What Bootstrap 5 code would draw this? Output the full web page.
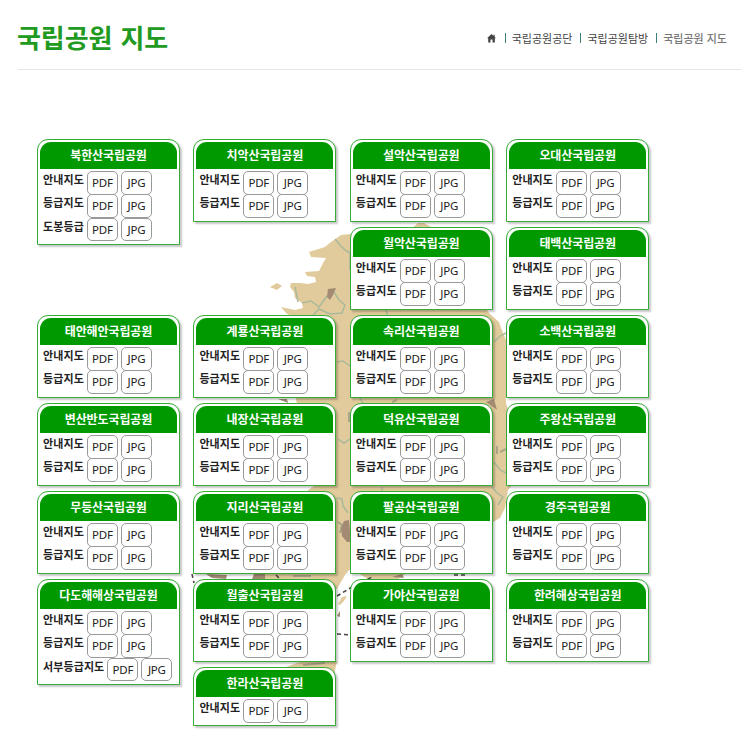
<!DOCTYPE html>
<html lang="ko">
<head>
  <meta charset="UTF-8" />
  <meta name="viewport" content="width=device-width, initial-scale=1.0"/>
  <title>국립공원 지도</title>
  <link href="https://cdn.jsdelivr.net/npm/bootstrap@5.3.0/dist/css/bootstrap.min.css" rel="stylesheet"/>
  <style>
    body {
      font-family: "Noto Sans", "Noto Sans CJK KR", sans-serif;
      color: #222;
      background: #fff;
      overflow: hidden;
    }
    .page-head {
      height: 70px;
      margin: 0 2px 0 18px;
      padding-right: 15px;
      border-bottom: 1px solid #e5e5e5;
    }
    .page-title {
      font: 700 26px/36px "Noto Sans CJK KR", sans-serif;
      color: #219a21;
      margin: 19px 0 0 -1px;
      letter-spacing: -.1px;
      word-spacing: 1px;
    }
    .crumbs {
      font: 400 11px/16px "Noto Sans CJK KR", sans-serif;
      color: #444;
      margin-top: 30px;
    }
    .crumbs svg { margin-right: 9px; }
    .crumbs span {
      display: flex;
      align-items: center;
      margin-right: 8px;
    }
    .crumbs span::before {
      content: "";
      width: 1px;
      height: 10px;
      background: #3c7f7b;
      margin-right: 6px;
    }
    .crumbs span:last-child {
      margin-right: -1px;
      font-weight: 500;
      color: #777;
    }
    .map-area {
      height: 684px;
      padding: 69px 0 0 37px;
    }
    .map-bg {
      position: absolute;
      left: 0;
      top: 0;
      z-index: 0;
    }
    .park-grid {
      position: relative;
      display: grid;
      grid-template-columns: repeat(4, 143px);
      grid-auto-rows: 82px;
      column-gap: 13.4px;
      row-gap: 6px;
      align-items: start;
    }
    .park {
      border: 1px solid #35ac35;
      border-radius: 11px 11px 0 0;
      background: #fff;
      padding: 2px 2px 3px;
      box-shadow: 2px 2px 2px rgba(0, 0, 0, .22);
    }
    .park h2 {
      height: 27px;
      margin: 0 0 2px;
      border-radius: 11px 11px 0 0;
      background: #090;
      color: #fff;
      font: 700 12px/25px "Noto Sans CJK KR", sans-serif;
      letter-spacing: -.1px;
      text-align: center;
    }
    .map-row {
      height: 23.3px;
      padding-left: 3px;
    }
    .map-label {
      font: 700 11px/17px "Noto Sans CJK KR", sans-serif;
      letter-spacing: .1px;
      color: #222;
      margin-right: 3px;
    }
    .map-btn {
      width: 31px;
      height: 23.5px;
      margin-right: 3px;
      border: 1px solid #999;
      border-radius: 5px;
      background: #fff;
      color: #222;
      font: 400 11.5px/21px "Noto Sans", sans-serif;
      letter-spacing: -.2px;
      text-align: center;
      text-decoration: none;
    }
  </style>
</head>
<body>
  <header class="page-head d-flex justify-content-between align-items-start">
    <h1 class="page-title">국립공원 지도</h1>
    <nav class="crumbs d-flex align-items-center">
      <svg width="9" height="9" viewBox="0 0 9 9"><path d="M4.5 0 0 4.3h1.2V8.5h2.3V5.5h2v3h2.3V4.3H9L7.7 3V.7H6.5v1.2z" fill="#444"/></svg>
      <span>국립공원공단</span>
      <span>국립공원탐방</span>
      <span>국립공원 지도</span>
    </nav>
  </header>

  <main class="map-area">
    <!-- Map of the peninsula behind the park cards -->
    <svg class="map-bg" width="743" height="754" viewBox="0 0 743 754">
      <g fill="#e1cb9c">
        <path d="M350 234 341 235 331 242 325 247 309 252 311 257 326 258 322 265 319 271 305 272 307 276 315 277 316 282 308 284 300 283 291 283 290 287 294 292 295 298 302 303 303 308 295 310 281 307 286 313 294 318 302 350 296 400 308 440 326 478 308 490 290 530 270 560 255 579 285 595 320 585 337 589 345 575 351 568 358 573 368 579 398 579 440 550 493 522 500 518 505 508 508 490 511 486 508 410 506 403 506 340 501 328 499 322 490 314 470 290 445 245 433 228 424 223 418 223 408 232Z"/>
        <path d="M270 287 277 283 282 286 277 290ZM338 604 342 597 347 596 344 601 340 605ZM286 667 300 662 337 661 333 680 300 690ZM335 566 350 566 345 574 337 577Z"/>
      </g>
      <g fill="none" stroke="#a9b99a" stroke-width="1.5">
        <path d="M335 239 341 246 345 250 350 253M295 287 298 302M302 303 311 301 319 307 327 296 334 292 339 300 345 305 342 313 330 314 319 309 313 315M337 362 343 361 350 366M338 439 344 443 350 439M337 498 342 499 343 506 348 513M350 253 350 270M386 310 389 320M360 398 364 405M494 342 500 336 506 333M494 462 500 470 506 473M492 487 497 493 503 497 498 505M382 487 382 493"/>
      </g>
      <g fill="#a28b72">
        <path d="M328 289 336 288 333 295 330 300 327 297ZM278 399 287 399 288 403ZM349 520 344 521 341 528 342 536 347 542 351 542ZM486 402 494 399 497 410ZM206 574 227 575 226 579 212 578ZM252 579 254 574 265 574 265 579ZM337 616 340 611 340 617ZM392 577 402 574 404 578Z"/>
      </g>
      <g fill="none" stroke="#8d927c" stroke-width="2" opacity=".65">
        <path d="M293 576h18M303 665l22-2M338 522l4 3-2 8M349 412v10M497 446v8M500 452l6-3M392 402l5-2"/>
      </g>
      <g fill="none" stroke="#4c4444" stroke-width="1.6" stroke-dasharray="4 3">
        <path d="M192 574 194 583M276 575 280 579M337 596 352 587 374 576M337 634 351 635M454 575H466"/>
      </g>
    </svg>

    <div class="park-grid" id="parkGrid"></div>
  </main>

  <script src="https://cdn.jsdelivr.net/npm/bootstrap@5.3.0/dist/js/bootstrap.bundle.min.js"></script>
  <script>
    const two = ["안내지도", "등급지도"];

    // name, row, column, maps
    const parks = [
      ["북한산국립공원", 1, 1, ["안내지도", "등급지도", "도봉등급"]],
      ["치악산국립공원", 1, 2, two],
      ["설악산국립공원", 1, 3, two],
      ["오대산국립공원", 1, 4, two],
      ["월악산국립공원", 2, 3, two],
      ["태백산국립공원", 2, 4, two],
      ["태안해안국립공원", 3, 1, two],
      ["계룡산국립공원", 3, 2, two],
      ["속리산국립공원", 3, 3, two],
      ["소백산국립공원", 3, 4, two],
      ["변산반도국립공원", 4, 1, two],
      ["내장산국립공원", 4, 2, two],
      ["덕유산국립공원", 4, 3, two],
      ["주왕산국립공원", 4, 4, two],
      ["무등산국립공원", 5, 1, two],
      ["지리산국립공원", 5, 2, two],
      ["팔공산국립공원", 5, 3, two],
      ["경주국립공원", 5, 4, two],
      ["다도해해상국립공원", 6, 1, ["안내지도", "등급지도", "서부등급지도"]],
      ["월출산국립공원", 6, 2, two],
      ["가야산국립공원", 6, 3, two],
      ["한려해상국립공원", 6, 4, two],
      ["한라산국립공원", 7, 2, ["안내지도"]]
    ];

    document.getElementById("parkGrid").innerHTML = parks.map(([name, row, col, maps]) => `
      <section class="park" style="grid-area: ${row} / ${col}">
        <h2>${name}</h2>
        ${maps.map(label => `
          <div class="map-row d-flex align-items-start">
            <span class="map-label">${label}</span>
            <a class="map-btn" href="#">PDF</a>
            <a class="map-btn" href="#">JPG</a>
          </div>`).join("")}
      </section>`).join("");
  </script>
</body>
</html>
